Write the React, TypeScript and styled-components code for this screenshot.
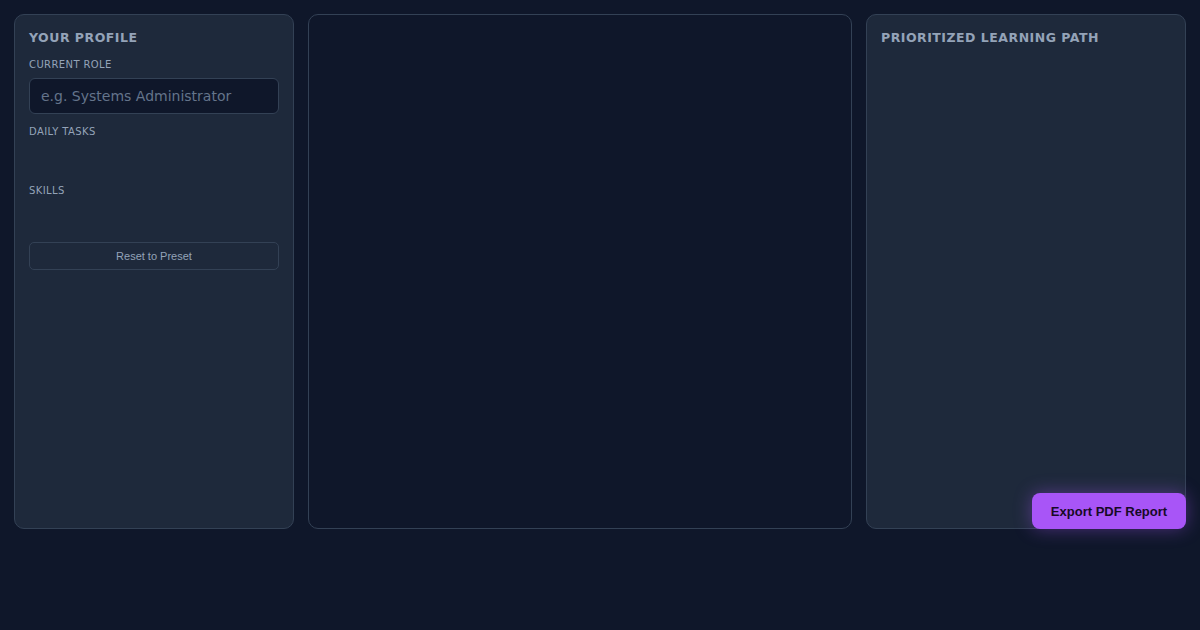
import React from "react";
import styled, { createGlobalStyle } from "styled-components";

const GlobalStyle = createGlobalStyle`
  html, body {
    margin: 0;
    padding: 0;
    background: #0f172a;
    font-family: "DejaVu Sans", sans-serif;
  }
  * {
    box-sizing: border-box;
  }
`;

const Page = styled.div`
  position: relative;
  width: 1200px;
  height: 630px;
  padding: 14px;
  background: #0f172a;
`;

const Layout = styled.div`
  display: grid;
  grid-template-columns: 280px 1fr 320px;
  gap: 14px;
  height: 515px;
`;

const Panel = styled.section<{ $dark?: boolean }>`
  display: flex;
  flex-direction: column;
  padding: 15px 14px 14px;
  border: 1px solid #334155;
  border-radius: 10px;
  background: ${(props) => (props.$dark ? "#0f172a" : "#1e293b")};
`;

const PanelTitle = styled.h2`
  margin: 0 0 12px;
  font-size: 12.5px;
  line-height: 16px;
  font-weight: 700;
  letter-spacing: 0.5px;
  color: #94a3b8;
  text-transform: uppercase;
`;

const Label = styled.label`
  display: block;
  font-size: 10px;
  line-height: 14px;
  letter-spacing: 0.4px;
  color: #94a3b8;
  text-transform: uppercase;
  margin-bottom: 6px;
`;

const Input = styled.input`
  width: 100%;
  height: 36px;
  padding: 0 11px;
  margin-bottom: 11px;
  background: #0f172a;
  border: 1px solid #334155;
  border-radius: 6px;
  color: #e2e8f0;
  font-family: "DejaVu Sans", sans-serif;
  font-size: 14px;
  outline: none;
  &::placeholder {
    color: #64748b;
  }
`;

const ChipList = styled.div<{ $gapAfter: number }>`
  min-height: 31px;
  margin: 1px 0 ${(props) => props.$gapAfter}px;
  display: flex;
  flex-wrap: wrap;
  gap: 6px;
`;

const GhostButton = styled.button`
  width: 100%;
  height: 28px;
  background: transparent;
  border: 1px solid #334155;
  border-radius: 5px;
  color: #94a3b8;
  font-family: "Liberation Sans", Arial, sans-serif;
  font-size: 11px;
  cursor: pointer;
`;

const ExportButton = styled.button`
  position: absolute;
  right: 14px;
  top: 493px;
  height: 36px;
  padding: 0 17px;
  min-width: 154px;
  background: #a855f7;
  border: 0;
  border-radius: 8px;
  color: #170a26;
  font-family: "Liberation Sans", Arial, sans-serif;
  font-size: 13px;
  font-weight: 700;
  box-shadow: 0 0 18px rgba(168, 85, 247, 0.4);
  cursor: pointer;
`;

export default function App() {
  return (
    <Page>
      <GlobalStyle />
      <Layout>
        <Panel>
          <PanelTitle>Your Profile</PanelTitle>
          <Label>Current Role</Label>
          <Input placeholder="e.g. Systems Administrator" />
          <Label>Daily Tasks</Label>
          <ChipList $gapAfter={7} />
          <Label>Skills</Label>
          <ChipList $gapAfter={6} />
          <GhostButton>Reset to Preset</GhostButton>
        </Panel>
        <Panel $dark />
        <Panel>
          <PanelTitle>Prioritized Learning Path</PanelTitle>
        </Panel>
      </Layout>
      <ExportButton>Export PDF Report</ExportButton>
    </Page>
  );
}
